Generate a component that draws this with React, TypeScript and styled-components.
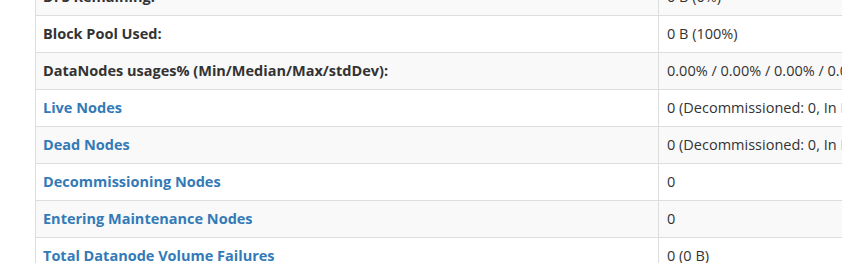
import styled, { createGlobalStyle } from 'styled-components';

const GlobalStyle = createGlobalStyle`
  html, body {
    margin: 0;
    padding: 0;
    background: #fff;
    overflow: hidden;
  }
  body {
    font-family: "Open Sans", "Noto Sans", sans-serif;
    font-size: 14.5px;
    line-height: 20px;
    color: #333;
  }
`;

// The page is scrolled so the first row is cut off at the top
const Page = styled.div`
  margin-top: -22px;
  padding-left: 35px;
  width: 1200px;
`;

const Table = styled.table`
  border-collapse: collapse;
  border-spacing: 0;
  table-layout: fixed;
  width: 1000px;
`;

const Row = styled.tr<{ $striped: boolean }>`
  background-color: ${props => (props.$striped ? '#f9f9f9' : '#fff')};
`;

const Label = styled.th`
  width: 623px;
  box-sizing: border-box;
  padding: 8px 8px 8px 7px;
  text-align: left;
  font-weight: bold;
  vertical-align: top;
  white-space: nowrap;
  border: 1px solid #ddd;
`;

const Value = styled.td`
  padding: 8px;
  vertical-align: top;
  white-space: nowrap;
  overflow: hidden;
  border: 1px solid #ddd;
`;

const Link = styled.a`
  color: #337ab7;
  text-decoration: none;
`;

interface Entry {
  label: string;
  value: string;
  link?: boolean;
}

const entries: Entry[] = [
  { label: 'DFS Remaining:', value: '0 B (0%)' },
  { label: 'Block Pool Used:', value: '0 B (100%)' },
  { label: 'DataNodes usages% (Min/Median/Max/stdDev):', value: '0.00% / 0.00% / 0.00% / 0.00%' },
  { label: 'Live Nodes', value: '0 (Decommissioned: 0, In Maintenance: 0)', link: true },
  { label: 'Dead Nodes', value: '0 (Decommissioned: 0, In Maintenance: 0)', link: true },
  { label: 'Decommissioning Nodes', value: '0', link: true },
  { label: 'Entering Maintenance Nodes', value: '0', link: true },
  { label: 'Total Datanode Volume Failures', value: '0 (0 B)', link: true },
];

const App = () => {
  return (
    <>
      <GlobalStyle />
      <Page>
        <Table>
          <tbody>
            {entries.map((entry, i) => (
              <Row key={entry.label} $striped={i % 2 === 0}>
                <Label>
                  {entry.link ? <Link href="#">{entry.label}</Link> : entry.label}
                </Label>
                <Value>{entry.value}</Value>
              </Row>
            ))}
          </tbody>
        </Table>
      </Page>
    </>
  );
};

export default App;
